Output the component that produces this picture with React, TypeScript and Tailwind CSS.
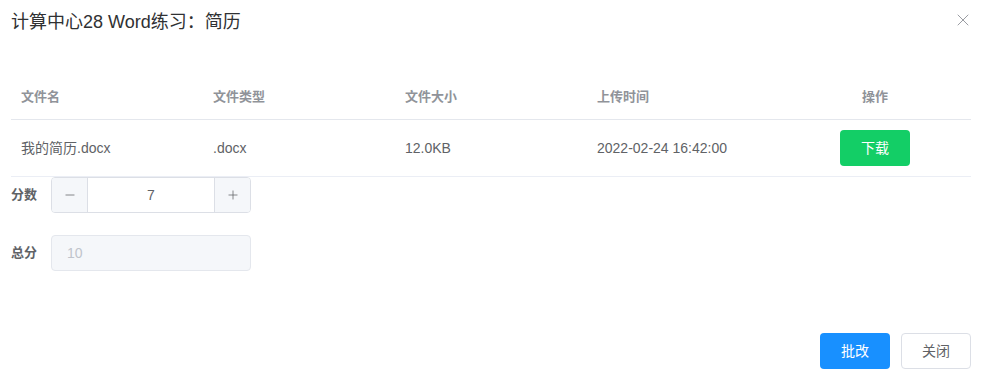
import { Minus, Plus, X } from "lucide-react"

const font = "font-['Liberation_Sans','Noto_Sans_CJK_SC',sans-serif]"

const columns = ["文件名", "文件类型", "文件大小", "上传时间"]

const file = {
  name: "我的简历.docx",
  type: ".docx",
  size: "12.0KB",
  uploadedAt: "2022-02-24 16:42:00",
}

function FileTable() {
  return (
    <div className="mx-[11px] mr-[17px] mt-[41px] text-[14px]">
      <div className="flex h-[45px] items-center border-b border-[#e4e7ed] text-[13px] font-bold text-[#909399]">
        {columns.map((c) => (
          <div key={c} className="w-[192px] px-[10px]">
            {c}
          </div>
        ))}
        <div className="w-[192px] text-center">操作</div>
      </div>
      <div className="flex h-[57px] items-center border-b border-[#ebeef5] text-[#606266]">
        <div className="w-[192px] px-[10px]">{file.name}</div>
        <div className="w-[192px] px-[10px]">{file.type}</div>
        <div className="w-[192px] px-[10px]">{file.size}</div>
        <div className="w-[192px] px-[10px]">{file.uploadedAt}</div>
        <div className="flex w-[192px] justify-center">
          <button className="h-[36px] w-[70px] rounded-[4px] bg-[#13ce66] text-[14px] text-white">
            下载
          </button>
        </div>
      </div>
    </div>
  )
}

function ScoreForm() {
  return (
    <div className="ml-[11px] flex flex-col gap-[22px]">
      <div className="flex items-center">
        <label className="w-[40px] text-[13px] font-bold text-[#606266]">分数</label>
        <div className="flex h-[36px] w-[200px] overflow-hidden rounded-[4px] border border-[#dcdfe6]">
          <span className="flex w-[36px] items-center justify-center border-r border-[#dcdfe6] bg-[#f5f7fa] text-[#606266]">
            <Minus size={14} strokeWidth={1.3} />
          </span>
          <span className="flex flex-1 items-center justify-center text-[14px] text-[#606266]">7</span>
          <span className="flex w-[36px] items-center justify-center border-l border-[#dcdfe6] bg-[#f5f7fa] text-[#606266]">
            <Plus size={14} strokeWidth={1.3} />
          </span>
        </div>
      </div>
      <div className="flex items-center">
        <label className="w-[40px] text-[13px] font-bold text-[#606266]">总分</label>
        <div className="flex h-[36px] w-[200px] items-center rounded-[4px] border border-[#e4e7ed] bg-[#f5f7fa] px-[15px] text-[14px] text-[#c0c4cc]">
          10
        </div>
      </div>
    </div>
  )
}

export default function App() {
  return (
    <div className={`${font} h-[377px] w-[988px] bg-white`}>
      <div className="flex items-start justify-between pl-[11px] pr-[15px] pt-[10px]">
        <h2 className="text-[18px] leading-[24px] text-[#303133]">计算中心28 Word练习：简历</h2>
        <button className="mt-[0px] text-[#909399]">
          <X size={20} strokeWidth={1.1} />
        </button>
      </div>
      <FileTable />
      <ScoreForm />
      <div className="mr-[17px] mt-[62px] flex justify-end gap-[11px]">
        <button className="h-[36px] w-[70px] rounded-[4px] bg-[#1890ff] text-[14px] text-white">
          批改
        </button>
        <button className="h-[36px] w-[70px] rounded-[4px] border border-[#dcdfe6] bg-white text-[14px] text-[#606266]">
          关闭
        </button>
      </div>
    </div>
  )
}
